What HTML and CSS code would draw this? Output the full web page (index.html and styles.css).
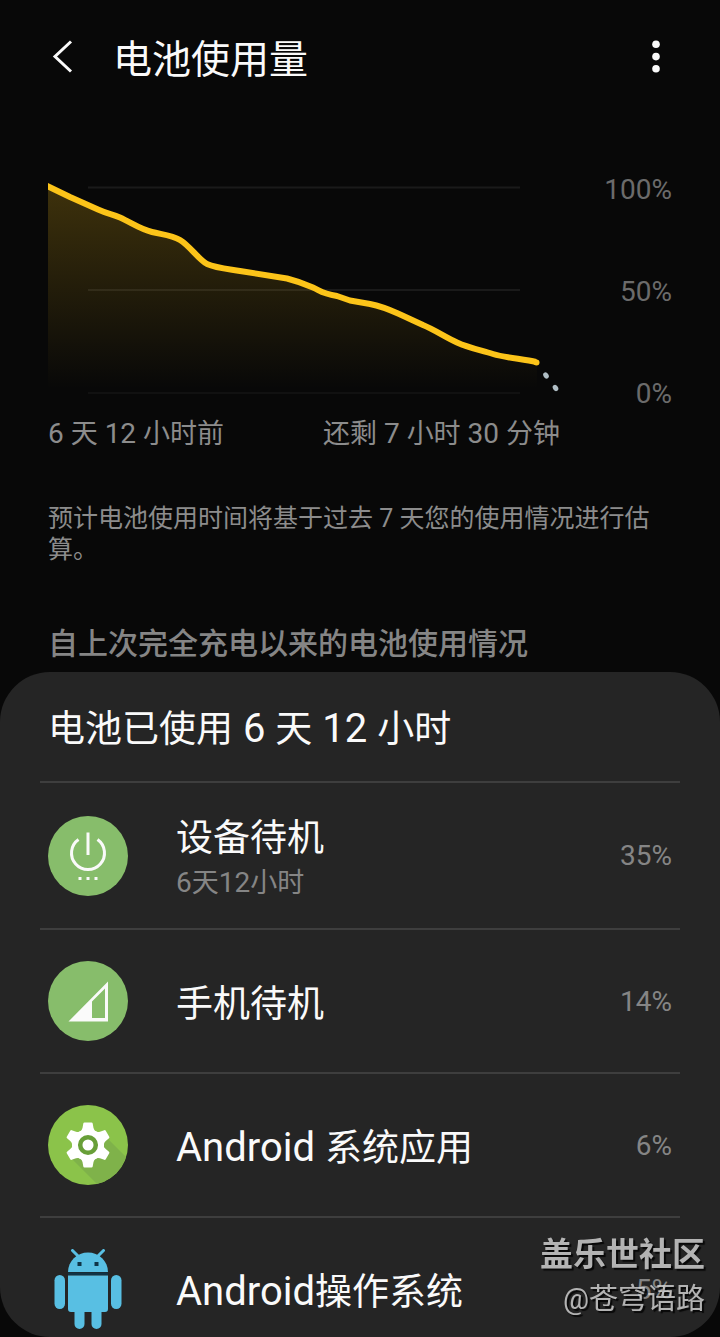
FILE: index.html
```html
<!DOCTYPE html>
<html lang="zh-CN">
<head>
    <meta charset="UTF-8">
    <meta name="viewport" content="width=device-width, initial-scale=1.0">
    <title>电池使用量</title>
    <link rel="stylesheet" href="styles.css">
</head>
<body>
    <div class="screen">
        <header class="top-bar">
            <button class="icon-button" type="button" aria-label="返回">
                <svg width="32" height="40" viewBox="0 0 32 40" fill="none" stroke="#fafafa" stroke-width="3">
                    <path d="M23 3.500L7 18.500L23 33.500"/>
                </svg>
            </button>
            <h1>电池使用量</h1>
            <button class="icon-button" type="button" aria-label="更多选项">
                <svg width="32" height="40" viewBox="0 0 32 40" fill="#fafafa">
                    <circle cx="16" cy="6.300" r="3.800"/>
                    <circle cx="16" cy="18.600" r="3.800"/>
                    <circle cx="16" cy="30.800" r="3.800"/>
                </svg>
            </button>
        </header>

        <section class="usage">
            <div class="chart">
                <svg class="plot" viewBox="0 0 512 228" preserveAspectRatio="none">
                    <defs>
                        <linearGradient id="fade" x1="0" y1="10" x2="0" y2="212" gradientUnits="userSpaceOnUse">
                            <stop offset="0" stop-color="#fcc419" stop-opacity="0.220"/>
                            <stop offset="1" stop-color="#fcc419" stop-opacity="0"/>
                        </linearGradient>
                    </defs>
                    <path d="M40 10.500H472M40 113H472" stroke="#1a1a1a" stroke-width="2"/>
                    <path d="M40 216H472" stroke="#111" stroke-width="2"/>
                    <path fill="url(#fade)" d="M0 9.500L22 20C32 24.500 40 28 50 32.500S64 37 72 40.500C84 46 92 52 104 55C114 57.500 124 58 132 63C142 69 150 82 159 87C168 91 180 92 192 94L239 101.500C249 104 257 107 265 110.500S273 116 289 119L302 123.500L322 127C332 129 340 132 350 136.500S365 143.500 375 148C387 153 397 160 409 165.500S432 173 445 177S476 182 489 185.500V216H0Z"/>
                    <path fill="none" stroke="#fcc419" stroke-width="6" stroke-linejoin="round" d="M-4 7.500L22 20C32 24.500 40 28 50 32.500S64 37 72 40.500C84 46 92 52 104 55C114 57.500 124 58 132 63C142 69 150 82 159 87C168 91 180 92 192 94L239 101.500C249 104 257 107 265 110.500S273 116 289 119L302 123.500L322 127C332 129 340 132 350 136.500S365 143.500 375 148C387 153 397 160 409 165.500S432 173 445 177S476 182 488 185"/>
                    <circle cx="488.500" cy="185.500" r="3" fill="#fcc419"/>
                    <g fill="#b0bec5">
                        <ellipse cx="498" cy="198.500" rx="2.500" ry="3.300" transform="rotate(-35 498 198.500)"/>
                        <ellipse cx="507.500" cy="211" rx="2.500" ry="3.300" transform="rotate(-35 507.500 211)"/>
                    </g>
                </svg>
                <div class="y-axis">
                    <span>100%</span>
                    <span>50%</span>
                    <span>0%</span>
                </div>
                <div class="x-axis">
                    <span><span class="latin">6 </span>天<span class="latin"> 12 </span>小时前</span>
                    <span>还剩<span class="latin"> 7 </span>小时<span class="latin"> 30 </span>分钟</span>
                </div>
            </div>
            <p class="note">预计电池使用时间将基于过去 7 天您的使用情况进行估算。</p>
            <h2>自上次完全充电以来的电池使用情况</h2>
        </section>

        <main class="card">
            <h3>电池已使用<span class="latin"> 6 </span>天<span class="latin"> 12 </span>小时</h3>
            <ul class="app-list">
                <li class="app-row with-detail">
                    <svg class="app-icon" viewBox="0 0 80 80">
                        <circle cx="40" cy="40" r="40" fill="#87bd6b"/>
                        <g fill="none" stroke="#fafafa" stroke-width="3">
                            <path d="M40 16.500V39"/>
                            <path d="M30.500 23.500A16.500 16.500 0 1 0 49.500 23.500"/>
                        </g>
                        <path fill="#fafafa" d="M30.500 61h3v3h-3zM38.500 61h3v3h-3zM46.500 61h3v3h-3z"/>
                    </svg>
                    <div class="app-text">
                        <span class="app-name">设备待机</span>
                        <span class="app-detail"><span class="latin">6</span>天<span class="latin">12</span>小时</span>
                    </div>
                    <span class="percent">35%</span>
                </li>
                <li class="app-row">
                    <svg class="app-icon" viewBox="0 0 80 80">
                        <circle cx="40" cy="40" r="40" fill="#87bd6b"/>
                        <path fill="#fafafa" fill-rule="evenodd" d="M60 20.500V60.500H20.500ZM57 27.500L44 40.500V57H57Z"/>
                    </svg>
                    <div class="app-text">
                        <span class="app-name">手机待机</span>
                    </div>
                    <span class="percent">14%</span>
                </li>
                <li class="app-row">
                    <svg class="app-icon" viewBox="0 0 80 80">
                        <defs>
                            <clipPath id="disc"><circle cx="40" cy="40" r="40"/></clipPath>
                        </defs>
                        <circle cx="40" cy="40" r="40" fill="#8bc34a"/>
                        <path clip-path="url(#disc)" fill="#7fb24a" d="M22 52L50 80H80V54L59 33L40 40Z"/>
                        <circle cx="40" cy="40" r="12" fill="#689f38"/>
                        <!-- gear: one tooth turned in steps of 60 degrees -->
                        <g fill="#fff">
                            <path id="tooth" d="M31 27Q34 26 34.500 23L35.300 18.500Q35.500 17.500 36.500 17.500H43.500Q44.500 17.500 44.700 18.500L45.500 23Q46 26 49 27Z"/>
                            <use href="#tooth" transform="rotate(60 40 40)"/>
                            <use href="#tooth" transform="rotate(120 40 40)"/>
                            <use href="#tooth" transform="rotate(180 40 40)"/>
                            <use href="#tooth" transform="rotate(240 40 40)"/>
                            <use href="#tooth" transform="rotate(300 40 40)"/>
                        </g>
                        <circle cx="40" cy="40" r="12.500" fill="none" stroke="#fff" stroke-width="7"/>
                        <circle cx="40" cy="40" r="7.800" fill="#fff" stroke="#689f38" stroke-width="4.500"/>
                    </svg>
                    <div class="app-text">
                        <span class="app-name"><span class="latin">Android </span>系统应用</span>
                    </div>
                    <span class="percent">6%</span>
                </li>
                <li class="app-row">
                    <svg class="app-icon" viewBox="0 0 80 80" fill="#58bfe3">
                        <path d="M20 23A20 19.500 0 0 1 60 23Z"/>
                        <path d="M24.500 1.500L31 8M55.500 1.500L49 8" stroke="#58bfe3" stroke-width="3" stroke-linecap="round"/>
                        <path fill="#0f3447" d="M29.500 13h4v4h-4zM46.500 13h4v4h-4zM20 23.500h40v2.500H20z"/>
                        <path d="M20 26.500H60V60Q60 63 57 63H53.500V75A5 5 0 0 1 43.500 75V63H36.500V75A5 5 0 0 1 26.500 75V63H23Q20 63 20 60Z"/>
                        <rect x="6.500" y="26" width="10.500" height="34" rx="5.200"/>
                        <rect x="63" y="26" width="10.500" height="34" rx="5.200"/>
                    </svg>
                    <div class="app-text">
                        <span class="app-name"><span class="latin">Android</span>操作系统</span>
                    </div>
                    <span class="percent">5%</span>
                </li>
            </ul>
        </main>

        <div class="watermark">
            <strong>盖乐世社区</strong>
            <span>@苍穹语路</span>
        </div>
    </div>
</body>
</html>
```
FILE: styles.css
```css
* {
    box-sizing: border-box;
}
body {
    margin: 0;
    background-color: #080808;
    color: #fafafa;
    font-family: Roboto, "Noto Sans CJK SC", sans-serif;
}
h1, h2, h3, p, ul {
    margin: 0;
    padding: 0;
    font-weight: 400;
}
/* latin letters and digits run slightly larger than the chinese text */
.latin {
    font-size: 28px;
    white-space: pre-wrap;
}
.screen {
    position: relative;
    display: flex;
    flex-direction: column;
    height: 100vh;
}

/* Title bar */
.top-bar {
    display: flex;
    align-items: center;
    height: 116px;
    padding: 0 48px;
}
.top-bar h1 {
    flex: 1;
    margin-left: 33px;
    padding-top: 4px;
    font-size: 39px;
    line-height: 56px;
}
.icon-button {
    display: flex;
    padding: 0;
    border: none;
    background: none;
}

/* Battery graph */
.usage {
    padding: 61px 48px 10px;
}
.chart {
    display: grid;
    grid-template-columns: 1fr 112px;
    row-gap: 13px;
}
.plot {
    display: block;
    width: 100%;
    height: 228px;
}
.y-axis {
    display: flex;
    flex-direction: column;
    justify-content: space-between;
    align-items: flex-end;
    padding-top: 2px;
    color: #6b6b6b;
    font-size: 28px;
    line-height: 22px;
}
.x-axis {
    display: flex;
    justify-content: space-between;
    color: #8c8c8c;
    font-size: 27px;
    line-height: 32px;
}
.note {
    margin-top: 53px;
    color: #8c8c8c;
    font-size: 25px;
    line-height: 31px;
}
.usage h2 {
    margin-top: 61px;
    color: #858585;
    font-size: 30px;
    font-weight: 500;
    line-height: 36px;
}

/* App list */
.card {
    flex: 1;
    min-height: 0;
    padding: 0 40px;
    overflow-y: auto;
    scrollbar-width: none;
    border-radius: 50px;
    background-color: #252525;
}
.card h3 {
    height: 109px;
    padding: 29px 8px 0;
    font-size: 37px;
    line-height: 56px;
}
.card h3 .latin,
.app-name .latin {
    font-size: 40px;
}
.app-list {
    list-style: none;
}
.app-row {
    display: flex;
    align-items: center;
    height: 144px;
    padding: 0 8px;
    border-top: 2px solid #3e3e3e;
}
.app-row.with-detail {
    height: 147px;
}
.app-icon {
    width: 80px;
    height: 80px;
    flex-shrink: 0;
}
.app-text {
    display: flex;
    flex: 1;
    flex-direction: column;
    margin-left: 48px;
    padding-top: 7px;
}
.app-name {
    font-size: 37px;
    line-height: 48px;
}
.app-detail {
    color: #858585;
    font-size: 27px;
    line-height: 40px;
}
.percent {
    color: #858585;
    font-size: 28px;
}

.watermark {
    position: absolute;
    right: 15px;
    bottom: 16px;
    display: flex;
    flex-direction: column;
    align-items: flex-end;
    color: #d8d8d8;
    font-size: 29px;
    line-height: 44px;
    opacity: 0.8;
    text-shadow: 2px 2px 1px #000;
}
.watermark strong {
    font-size: 33px;
}
```
